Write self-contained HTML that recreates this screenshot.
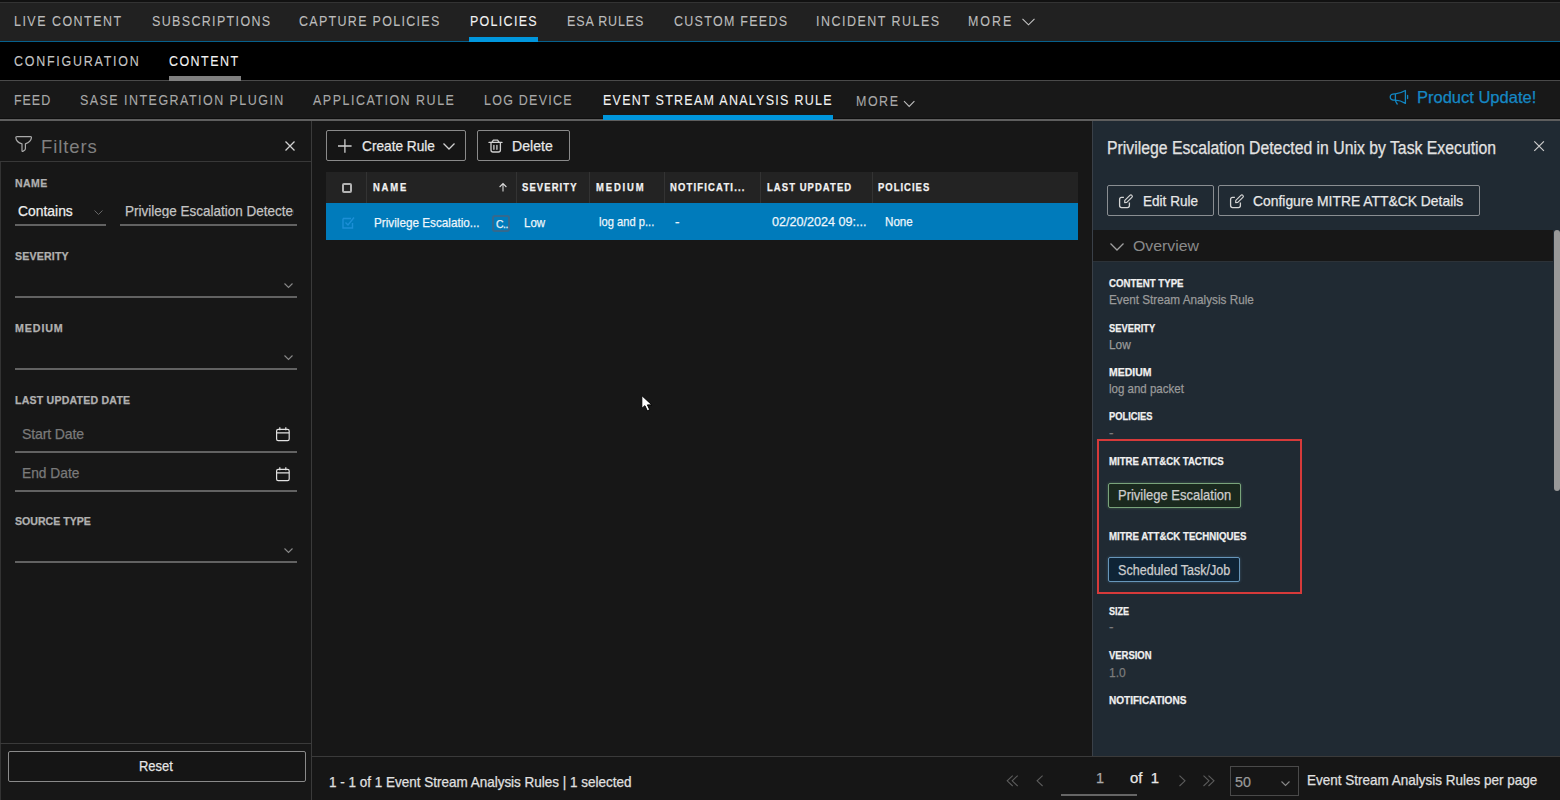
<!DOCTYPE html>
<html><head><meta charset="utf-8">
<style>
*{margin:0;padding:0;box-sizing:border-box}
html,body{width:1560px;height:800px;overflow:hidden;background:#171717;font-family:"Liberation Sans",sans-serif;position:relative}
.a{position:absolute}
.t{position:absolute;white-space:nowrap;line-height:1}
.n1{font-size:14.5px;color:#bcbcbc;letter-spacing:1.6px}
.n3{font-size:14.5px;color:#a8a8a8;letter-spacing:1.6px}
.lbl{font-size:10.6px;font-weight:bold;color:#b0b0b0;letter-spacing:0.6px}
.rl{font-size:11px;font-weight:bold;color:#f0f0f0}
.rv{font-size:13.5px;color:#9a9a9a}
svg{position:absolute;overflow:visible}
.sx{transform:scaleX(0.86);transform-origin:0 0}
.t{-webkit-text-stroke:0.25px currentColor}
.n1,.n3{-webkit-text-stroke:0.1px currentColor}
</style></head><body>

<!-- NAV 1 -->
<div class="a" style="left:0;top:0;width:1560px;height:42px;background:#212121"></div>
<div class="a" style="left:0;top:0;width:1560px;height:2px;background:#111"></div>
<div class="a" style="left:0;top:2px;width:1560px;height:1px;background:#333"></div>
<div class="a" style="left:0;top:41px;width:1560px;height:1px;background:#06608c"></div>
<div class="a" style="left:469px;top:37px;width:69px;height:5px;background:#0096dc"></div>
<div id="n1a" class="t n1 sx" style="left:14px;top:14px;letter-spacing:1.729px">LIVE CONTENT</div>
<div id="n1b" class="t n1 sx" style="left:152px;top:14px;letter-spacing:1.58px">SUBSCRIPTIONS</div>
<div id="n1c" class="t n1 sx" style="left:299px;top:14px;letter-spacing:1.531px">CAPTURE POLICIES</div>
<div id="n1d" class="t n1 sx" style="left:470px;top:14px;color:#f2f2f2;letter-spacing:1.504px">POLICIES</div>
<div id="n1e" class="t n1 sx" style="left:567px;top:14px;letter-spacing:1.012px">ESA RULES</div>
<div id="n1f" class="t n1 sx" style="left:674px;top:14px;letter-spacing:1.504px">CUSTOM FEEDS</div>
<div id="n1g" class="t n1 sx" style="left:816px;top:14px;letter-spacing:1.73px">INCIDENT RULES</div>
<div id="n1h" class="t n1 sx" style="left:968px;top:14px;letter-spacing:2.277px">MORE</div>
<svg style="left:1022px;top:18px" width="14" height="8"><path d="M0.5 0.8 L6.5 6.8 L12.5 0.8" stroke="#c4c4c4" stroke-width="1.1" fill="none"/></svg>

<!-- NAV 2 -->
<div class="a" style="left:0;top:42px;width:1560px;height:38px;background:#000"></div>
<div class="a" style="left:0;top:80px;width:1560px;height:1px;background:#4a4a4a"></div>
<div class="a" style="left:169px;top:76px;width:72px;height:5px;background:#808080"></div>
<div id="n2a" class="t n1 sx" style="left:14px;top:54px;color:#c4c4c4;letter-spacing:2.034px">CONFIGURATION</div>
<div id="n2b" class="t n1 sx" style="left:169px;top:54px;color:#f2f2f2;letter-spacing:1.691px">CONTENT</div>

<!-- NAV 3 -->
<div class="a" style="left:0;top:81px;width:1560px;height:38px;background:#181818"></div>
<div class="a" style="left:0;top:118px;width:1560px;height:1px;background:#0e0e0e"></div>
<div class="a" style="left:0;top:119px;width:1560px;height:2px;background:#5e5e5e"></div>
<div class="a" style="left:603px;top:115px;width:230px;height:5px;background:#0096dc"></div>
<div id="n3a" class="t n3 sx" style="left:14px;top:93px;letter-spacing:1.124px">FEED</div>
<div id="n3b" class="t n3 sx" style="left:80px;top:93px;letter-spacing:1.714px">SASE INTEGRATION PLUGIN</div>
<div id="n3c" class="t n3 sx" style="left:313px;top:93px;letter-spacing:1.754px">APPLICATION RULE</div>
<div id="n3d" class="t n3 sx" style="left:484px;top:93px;letter-spacing:1.465px">LOG DEVICE</div>
<div id="n3e" class="t n3 sx" style="left:603px;top:93px;color:#f2f2f2;letter-spacing:1.499px">EVENT STREAM ANALYSIS RULE</div>
<div id="n3f" class="t n3 sx" style="left:856px;top:94px;letter-spacing:1.765px">MORE</div>
<svg style="left:903px;top:100px" width="12" height="8"><path d="M1 1.2 L6.2 6.4 L11.4 1.2" stroke="#bdbdbd" stroke-width="1.1" fill="none"/></svg>
<svg style="left:1389px;top:90px" width="20" height="15"><path d="M6.4 3.8 C3 3.6 1.2 4.8 1.2 6.9 C1.2 9 3 10.2 6.4 10.2 M6.4 3.8 C10 3.6 13 2.5 16.4 0.5 V13.4 C13 11.3 10 10.3 6.4 10.2 M6.4 3.8 V10.2 C6.6 11.8 7.4 13 8.2 14 M18.6 5.5 V8.5" stroke="#1286c2" stroke-width="1.3" fill="none" stroke-linejoin="round" stroke-linecap="round"/></svg>
<div id="pu" class="t" style="left:1417px;top:89px;font-size:16.5px;color:#1588c4">Product Update!</div>

<!-- LEFT PANEL -->
<div class="a" style="left:311px;top:121px;width:1px;height:679px;background:#3a3a3a"></div>
<div class="a" style="left:0;top:161px;width:311px;height:1px;background:#383838"></div>
<div class="a" style="left:0;top:162px;width:1px;height:638px;background:#333"></div>
<svg style="left:15px;top:136px" width="17" height="16"><path d="M2 0.6 H15.4 Q16.6 0.6 16.4 1.9 C16 5 13 7 10.4 7.9 V12.6 Q10.4 13.4 9.8 14 L8.1 15.2 Q7 15.9 7 14.8 V7.9 C4 7 1.1 5 0.9 1.9 Q0.8 0.6 2 0.6 Z" stroke="#aaaaaa" stroke-width="1.2" fill="none" stroke-linejoin="round"/></svg>
<div id="flt" class="t" style="-webkit-text-stroke:0;left:41px;top:138px;font-size:18.5px;color:#808080;letter-spacing:0.9px">Filters</div>
<svg style="left:285px;top:141px" width="10" height="10"><path d="M0.5 0.5 L9.5 9.5 M9.5 0.5 L0.5 9.5" stroke="#d0d0d0" stroke-width="1.3"/></svg>

<div id="lb1" class="t lbl" style="left:15px;top:178px;letter-spacing:0.467px;transform:scaleX(0.9924);transform-origin:0 0">NAME</div>
<div id="cont" class="t" style="left:18px;top:203px;font-size:15px;color:#eeeeee;transform:scaleX(0.9256);transform-origin:0 0">Contains</div>
<svg style="left:94px;top:210px" width="9" height="6"><path d="M0.5 0.5 L4.5 4.5 L8.5 0.5" stroke="#666" stroke-width="1" fill="none"/></svg>
<div class="a" style="left:15px;top:224px;width:91px;height:2px;background:#626262"></div>
<div id="pe" class="t" style="left:125px;top:203px;font-size:15px;color:#c4c4c4;width:187px;overflow:hidden;transform:scaleX(0.9);transform-origin:0 0">Privilege Escalation Detected in Unix</div>
<div class="a" style="left:120px;top:224px;width:177px;height:2px;background:#626262"></div>

<div id="lb2" class="t lbl" style="left:15px;top:251px;letter-spacing:0.172px">SEVERITY</div>
<svg style="left:284px;top:283px" width="9" height="6"><path d="M0.5 0.5 L4.5 4.5 L8.5 0.5" stroke="#888" stroke-width="1.1" fill="none"/></svg>
<div class="a" style="left:15px;top:296px;width:282px;height:2px;background:#626262"></div>

<div id="lb3" class="t lbl" style="left:15px;top:323px;letter-spacing:0.88px;transform:scaleX(1.0085);transform-origin:0 0">MEDIUM</div>
<svg style="left:284px;top:355px" width="9" height="6"><path d="M0.5 0.5 L4.5 4.5 L8.5 0.5" stroke="#888" stroke-width="1.1" fill="none"/></svg>
<div class="a" style="left:15px;top:368px;width:282px;height:2px;background:#626262"></div>

<div id="lb4" class="t lbl" style="left:15px;top:395px;letter-spacing:0.225px;transform:scaleX(0.9957);transform-origin:0 0">LAST UPDATED DATE</div>
<div id="sd" class="t" style="left:22px;top:426px;font-size:15px;color:#7a7a7a;transform:scaleX(0.9396);transform-origin:0 0;letter-spacing:-0.167px">Start Date</div>
<svg style="left:276px;top:427px" width="14" height="14"><rect x="0.6" y="2.4" width="12.6" height="11.2" rx="1.6" stroke="#e2e2e2" stroke-width="1.2" fill="none"/><path d="M0.6 5.8 H13.2 M3.8 0.3 V3.2 M9.8 0.3 V3.2" stroke="#e2e2e2" stroke-width="1.2" fill="none"/></svg>
<div class="a" style="left:15px;top:451px;width:282px;height:2px;background:#626262"></div>
<div id="ed" class="t" style="left:22px;top:465px;font-size:15px;color:#7a7a7a;transform:scaleX(0.918);transform-origin:0 0">End Date</div>
<svg style="left:276px;top:467px" width="14" height="14"><rect x="0.6" y="2.4" width="12.6" height="11.2" rx="1.6" stroke="#e2e2e2" stroke-width="1.2" fill="none"/><path d="M0.6 5.8 H13.2 M3.8 0.3 V3.2 M9.8 0.3 V3.2" stroke="#e2e2e2" stroke-width="1.2" fill="none"/></svg>
<div class="a" style="left:15px;top:490px;width:282px;height:2px;background:#626262"></div>

<div id="lb5" class="t lbl" style="left:15px;top:516px;letter-spacing:0.0px">SOURCE TYPE</div>
<svg style="left:284px;top:548px" width="9" height="6"><path d="M0.5 0.5 L4.5 4.5 L8.5 0.5" stroke="#888" stroke-width="1.1" fill="none"/></svg>
<div class="a" style="left:15px;top:561px;width:282px;height:2px;background:#626262"></div>

<div class="a" style="left:0;top:743px;width:312px;height:1px;background:#3a3a3a"></div>
<div class="a" style="left:8px;top:751px;width:298px;height:31px;border:1px solid #8a8a8a;border-radius:2px;background:#151515"></div>
<div id="rst" class="t" style="left:139px;top:758px;font-size:15px;color:#e6e6e6;transform:scaleX(0.8622);transform-origin:0 0">Reset</div>

<!-- MIDDLE -->
<div class="a" style="left:326px;top:130px;width:140px;height:31px;border:1px solid #8a8a8a;border-radius:2px;background:#151515"></div>
<svg style="left:338px;top:139px" width="14" height="14"><path d="M6.9 0.3 V13.8 M0 7 H13.6" stroke="#cfcfcf" stroke-width="1.3"/></svg>
<div id="cr" class="t" style="left:362px;top:138px;font-size:15px;color:#e8e8e8;transform:scaleX(0.9117);transform-origin:0 0">Create Rule</div>
<svg style="left:443px;top:143px" width="12" height="7"><path d="M0.5 0.5 L6 6 L11.5 0.5" stroke="#d0d0d0" stroke-width="1.3" fill="none"/></svg>
<div class="a" style="left:477px;top:130px;width:93px;height:31px;border:1px solid #8a8a8a;border-radius:2px;background:#151515"></div>
<svg style="left:488px;top:139px" width="16" height="15"><path d="M1 3.4 H14 M3.8 3.4 L5.4 1.2 H9.6 L11.2 3.4 M3 3.4 V11 Q3 13 5 13 H10.4 Q12.4 13 12.4 11 V3.4 M5.9 6.3 V10.3 M8.9 6.3 V10.3" stroke="#d0d0d0" stroke-width="1.3" fill="none" stroke-linejoin="round" stroke-linecap="round"/></svg>
<div id="dl" class="t" style="left:512px;top:138px;font-size:15px;color:#e8e8e8;transform:scaleX(0.9394);transform-origin:0 0">Delete</div>

<div class="a" style="left:326px;top:172px;width:752px;height:31px;background:#232323"></div>
<div class="a" style="left:366px;top:172px;width:1px;height:31px;background:#333"></div>
<div class="a" style="left:516px;top:172px;width:1px;height:31px;background:#333"></div>
<div class="a" style="left:589px;top:172px;width:1px;height:31px;background:#333"></div>
<div class="a" style="left:664px;top:172px;width:1px;height:31px;background:#333"></div>
<div class="a" style="left:760px;top:172px;width:1px;height:31px;background:#333"></div>
<div class="a" style="left:872px;top:172px;width:1px;height:31px;background:#333"></div>
<div class="a" style="left:342px;top:183px;width:10px;height:10px;border:2px solid #b4b4b4;border-radius:2px"></div>
<div id="th1" class="t sx" style="left:373px;top:182px;font-size:11px;font-weight:bold;color:#f2f2f2;letter-spacing:2.072px">NAME</div>
<svg style="left:499px;top:183px" width="8" height="9"><path d="M4 0.8 V8.5 M0.6 4 L4 0.6 L7.4 4" stroke="#d8d8d8" stroke-width="1.1" fill="none"/></svg>
<div id="th2" class="t sx" style="left:522px;top:182px;font-size:11px;font-weight:bold;color:#f2f2f2;letter-spacing:1.279px">SEVERITY</div>
<div id="th3" class="t sx" style="left:596px;top:182px;font-size:11px;font-weight:bold;color:#f2f2f2;letter-spacing:2.162px">MEDIUM</div>
<div id="th4" class="t sx" style="left:670px;top:182px;font-size:11px;font-weight:bold;color:#f2f2f2;letter-spacing:1.369px">NOTIFICATI...</div>
<div id="th5" class="t sx" style="left:767px;top:182px;font-size:11px;font-weight:bold;color:#f2f2f2;letter-spacing:1.244px">LAST UPDATED</div>
<div id="th6" class="t sx" style="left:878px;top:182px;font-size:11px;font-weight:bold;color:#f2f2f2;letter-spacing:1.175px">POLICIES</div>

<div class="a" style="left:326px;top:203px;width:752px;height:37px;background:#007bbb"></div>
<svg style="left:342px;top:216px" width="13" height="13"><path d="M1 2.5 H9 M1 2.5 V12 H10.5 V7 M3.5 6.5 L6 9 L12 1.5" stroke="#1c8fd6" stroke-width="1.4" fill="none"/></svg>
<div id="r1" class="t" style="left:374px;top:216px;font-size:13.5px;color:#eef6fb;transform:scaleX(0.8686);transform-origin:0 0">Privilege Escalatio...</div>
<div class="a" style="left:492px;top:215px;width:18px;height:17px;border:2px solid #34698e;border-radius:3px"></div>
<div id="r2" class="t" style="left:496px;top:219px;font-size:10.5px;color:#e8f2f8;letter-spacing:-0.5px">C..</div>
<div id="r3" class="t" style="left:524px;top:216px;font-size:13.5px;color:#eef6fb;transform:scaleX(0.8531);transform-origin:0 0">Low</div>
<div id="r4" class="t" style="left:599px;top:215px;font-size:13.5px;color:#eef6fb;transform:scaleX(0.8274);transform-origin:0 0">log and p...</div>
<div id="r5" class="t" style="left:675px;top:215px;font-size:13.5px;color:#eef6fb">-</div>
<div id="r6" class="t" style="left:772px;top:215px;font-size:13.5px;color:#eef6fb;transform:scaleX(0.9326);transform-origin:0 0">02/20/2024 09:...</div>
<div id="r7" class="t" style="left:885px;top:215px;font-size:13.5px;color:#eef6fb;transform:scaleX(0.8614);transform-origin:0 0">None</div>

<svg style="left:641px;top:395px" width="13" height="17"><path d="M0.8 0.5 L0.8 13.4 L3.9 10.7 L6.3 15.8 L8.7 14.7 L6.4 9.9 L10.8 9.9 Z" fill="#fff" stroke="#000" stroke-width="1" stroke-linejoin="round"/></svg>

<!-- RIGHT PANEL -->
<div class="a" style="left:1092px;top:121px;width:1px;height:635px;background:#3a4048"></div>
<div class="a" style="left:1093px;top:121px;width:467px;height:635px;background:#202a33"></div>
<div id="ttl" class="t" style="left:1107px;top:140px;font-size:17.5px;color:#e2e2e2;transform:scaleX(0.9016);transform-origin:0 0">Privilege Escalation Detected in Unix by Task Execution</div>
<svg style="left:1534px;top:141px" width="10" height="10"><path d="M0.3 0.3 L9.9 9.9 M9.9 0.3 L0.3 9.9" stroke="#cccccc" stroke-width="1.2"/></svg>
<div class="a" style="left:1107px;top:185px;width:107px;height:31px;border:1px solid #8a8e92;border-radius:2px"></div>
<svg style="left:1118px;top:194px" width="16" height="15"><path d="M5.9 3.4 H3.6 Q1.6 3.4 1.6 5.4 V11.6 Q1.6 13.6 3.6 13.6 H9.4 Q11.4 13.6 11.4 11.6 V8.6" stroke="#d4d4d4" stroke-width="1.3" fill="none"/><path transform="translate(10.2 5) rotate(-45)" d="M-5 0 L-3.4 -1.4 H3.8 Q5.2 -1.4 5.2 0 Q5.2 1.4 3.8 1.4 H-3.4 Z" stroke="#d4d4d4" stroke-width="1.2" fill="none" stroke-linejoin="round"/></svg>
<div id="er" class="t" style="left:1143px;top:193px;font-size:15px;color:#e8e8e8;transform:scaleX(0.9038);transform-origin:0 0">Edit Rule</div>
<div class="a" style="left:1218px;top:185px;width:262px;height:31px;border:1px solid #8a8e92;border-radius:2px"></div>
<svg style="left:1229px;top:194px" width="16" height="15"><path d="M5.9 3.4 H3.6 Q1.6 3.4 1.6 5.4 V11.6 Q1.6 13.6 3.6 13.6 H9.4 Q11.4 13.6 11.4 11.6 V8.6" stroke="#d4d4d4" stroke-width="1.3" fill="none"/><path transform="translate(10.2 5) rotate(-45)" d="M-5 0 L-3.4 -1.4 H3.8 Q5.2 -1.4 5.2 0 Q5.2 1.4 3.8 1.4 H-3.4 Z" stroke="#d4d4d4" stroke-width="1.2" fill="none" stroke-linejoin="round"/></svg>
<div id="cfg" class="t" style="left:1253px;top:193px;font-size:15px;color:#e8e8e8;transform:scaleX(0.9251);transform-origin:0 0">Configure MITRE ATT&amp;CK Details</div>

<div class="a" style="left:1093px;top:230px;width:460px;height:31px;background:#171717"></div>
<div class="a" style="left:1093px;top:261px;width:460px;height:1px;background:#2c3238"></div>
<svg style="left:1110px;top:243px" width="14" height="8"><path d="M0.5 0.5 L7 7 L13.5 0.5" stroke="#a0a0a0" stroke-width="1.3" fill="none"/></svg>
<div id="ov" class="t" style="-webkit-text-stroke:0;left:1133px;top:238px;font-size:15.5px;color:#8a8a8a;transform:scaleX(1.0217);transform-origin:0 0">Overview</div>
<div class="a" style="left:1554px;top:230px;width:6px;height:261px;background:#999;border-radius:3px"></div>

<div id="l1" class="t rl"  style="left:1109px;top:278px;transform:scaleX(0.8776);transform-origin:0 0">CONTENT TYPE</div>
<div id="v1" class="t rv" style="left:1109px;top:293px;transform:scaleX(0.8692);transform-origin:0 0">Event Stream Analysis Rule</div>
<div id="l2" class="t rl"  style="left:1109px;top:323px;transform:scaleX(0.851);transform-origin:0 0">SEVERITY</div>
<div id="v2" class="t rv" style="left:1109px;top:338px;transform:scaleX(0.8768);transform-origin:0 0">Low</div>
<div id="l3" class="t rl"  style="left:1109px;top:367px;transform:scaleX(0.9513);transform-origin:0 0">MEDIUM</div>
<div id="v3" class="t rv" style="left:1109px;top:382px;transform:scaleX(0.8525);transform-origin:0 0">log and packet</div>
<div id="l4" class="t rl"  style="left:1109px;top:411px;transform:scaleX(0.8462);transform-origin:0 0">POLICIES</div>
<div id="v4" class="t rv" style="color:#7c7c7c;left:1109px;top:426px">-</div>

<div class="a" style="left:1097px;top:439px;width:205px;height:155px;border:2px solid #d63a3a"></div>
<div id="l5" class="t rl"  style="left:1109px;top:456px;transform:scaleX(0.8747);transform-origin:0 0">MITRE ATT&amp;CK TACTICS</div>
<div class="a" style="left:1108px;top:483px;width:133px;height:25px;border:1px solid #79a47b;border-radius:2px;background:#1a291e;box-shadow:0 0 3px rgba(120,170,120,0.4)"></div>
<div id="tg1" class="t" style="left:1118px;top:488px;font-size:14px;color:#cdcdcd;transform:scaleX(0.9269);transform-origin:0 0">Privilege Escalation</div>
<div id="l6" class="t rl"  style="left:1109px;top:531px;transform:scaleX(0.8778);transform-origin:0 0">MITRE ATT&amp;CK TECHNIQUES</div>
<div class="a" style="left:1108px;top:557px;width:132px;height:25px;border:1px solid #6796ba;border-radius:2px;background:#0f2436;box-shadow:0 0 3px rgba(100,150,190,0.4)"></div>
<div id="tg2" class="t" style="left:1118px;top:563px;font-size:14px;color:#cdcdcd;transform:scaleX(0.8976);transform-origin:0 0">Scheduled Task/Job</div>

<div id="l7" class="t rl"  style="left:1109px;top:606px;transform:scaleX(0.8246);transform-origin:0 0">SIZE</div>
<div id="v7" class="t rv" style="color:#7c7c7c;left:1109px;top:620px">-</div>
<div id="l8" class="t rl"  style="left:1109px;top:650px;transform:scaleX(0.859);transform-origin:0 0">VERSION</div>
<div id="v8" class="t rv" style="color:#7c7c7c;left:1109px;top:666px;transform:scaleX(0.8905);transform-origin:0 0">1.0</div>
<div id="l9" class="t rl"  style="left:1109px;top:695px;transform:scaleX(0.913);transform-origin:0 0">NOTIFICATIONS</div>

<!-- FOOTER -->
<div class="a" style="left:312px;top:756px;width:1248px;height:1px;background:#3a3a3a"></div>
<div class="a" style="left:312px;top:757px;width:1248px;height:43px;background:#161616"></div>
<div id="ft" class="t" style="left:329px;top:775px;font-size:14.5px;color:#e0e0e0;transform:scaleX(0.9299);transform-origin:0 0">1 - 1 of 1 Event Stream Analysis Rules | 1 selected</div>
<svg style="left:1000px;top:770px" width="220" height="20"><path d="M12.7 5.6 L7.2 10.8 L12.7 16 M17.7 5.6 L12.2 10.8 L17.7 16 M42.6 5.6 L37.1 10.8 L42.6 16 M179.5 5.6 L185 10.8 L179.5 16 M203.5 5.6 L209 10.8 L203.5 16 M208.5 5.6 L214 10.8 L208.5 16" stroke="#5c5c5c" stroke-width="1.1" fill="none"/></svg>
<div id="pin" class="t" style="left:1096px;top:771px;font-size:14.5px;color:#aaa">1</div>
<div class="a" style="left:1061px;top:794px;width:76px;height:2px;background:#666"></div>
<div id="of" class="t" style="left:1130px;top:771px;font-size:14.5px;color:#e8e8e8;transform:scaleX(1.0291);transform-origin:0 0">of&nbsp; 1</div>
<div class="a" style="left:1230px;top:766px;width:69px;height:30px;border:1.5px solid #4a4a4a"></div>
<div id="fifty" class="t" style="left:1235px;top:774px;font-size:15px;color:#9a9a9a;transform:scaleX(0.9541);transform-origin:0 0">50</div>
<svg style="left:1281px;top:781px" width="9" height="5"><path d="M0.5 0.5 L4.5 4.5 L8.5 0.5" stroke="#888" stroke-width="1.1" fill="none"/></svg>
<div id="pp" class="t" style="left:1307px;top:772px;font-size:15px;color:#e0e0e0;transform:scaleX(0.8995);transform-origin:0 0">Event Stream Analysis Rules per page</div>

</body></html>
